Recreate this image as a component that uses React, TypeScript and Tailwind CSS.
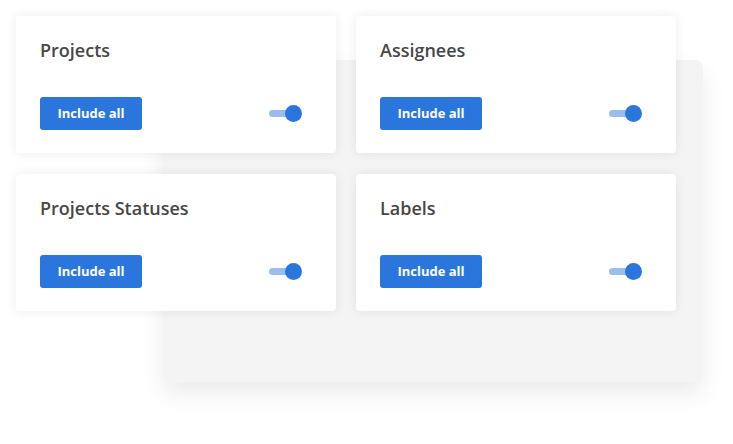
import React from 'react';

const filters = ['Projects', 'Assignees', 'Projects Statuses', 'Labels'];

const Toggle = () => (
  <div className="relative w-[33px] h-[17px] flex items-center">
    <div className="h-[7px] w-[26px] rounded-full bg-[#9bbdee]" />
    <div className="absolute right-0 top-0 w-[17px] h-[17px] rounded-full bg-[#2b76dd]" />
  </div>
);

const FilterCard = ({ title }: { title: string }) => (
  <div className="bg-white rounded-[4px] shadow-[0_0_12px_rgba(0,0,0,0.08)] h-[137px] pl-6 pr-[34px] pt-[21px]">
    <h3 className="text-[18px] leading-[26px] font-semibold text-[#474747]">{title}</h3>
    <div className="mt-[34px] flex items-center justify-between">
      <button className="h-[33px] w-[102px] rounded-[3px] bg-[#2b76dd] text-white text-[13px] font-bold">
        Include all
      </button>
      <Toggle />
    </div>
  </div>
);

export default function App() {
  return (
    <div className="w-[733px] h-[444px] bg-white overflow-hidden font-['Open_Sans',sans-serif]">
      <div className="relative w-[733px] h-[444px]">
        {/* background panel behind the cards */}
        <div className="absolute left-[163px] top-[60px] w-[540px] h-[322px] rounded-[8px] bg-[#f4f4f4] shadow-[0_12px_24px_rgba(0,0,0,0.08)]" />
        <div className="relative grid grid-cols-[320px_320px] gap-x-5 gap-y-[21px] pl-4 pt-4">
          {filters.map((f) => (
            <FilterCard key={f} title={f} />
          ))}
        </div>
      </div>
    </div>
  );
}
